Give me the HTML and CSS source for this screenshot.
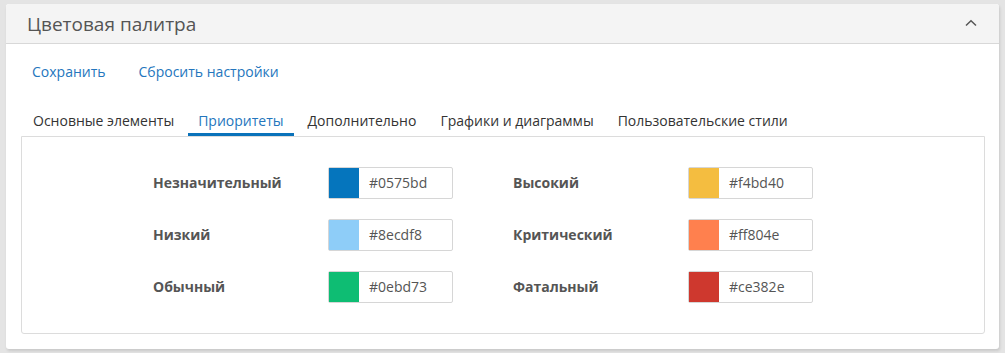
FILE: index.html
```html
<!DOCTYPE html>
<html lang="ru">
<head>
<meta charset="utf-8">
<link rel="stylesheet" href="styles.css">
</head>
<body>
<div class="card">
  <div class="card-header">
    <span class="title">Цветовая палитра</span>
    <svg class="chevron" width="12" height="8" viewBox="0 0 12 8"><path d="M1 6.5 L6 1.8 L11 6.5" fill="none" stroke="#555" stroke-width="1.5"/></svg>
  </div>
  <div class="card-body">
    <div class="actions">
      <a class="link">Сохранить</a>
      <a class="link">Сбросить настройки</a>
    </div>
    <div class="tabs">
      <div class="tab">Основные элементы</div>
      <div class="tab active">Приоритеты</div>
      <div class="tab">Дополнительно</div>
      <div class="tab">Графики и диаграммы</div>
      <div class="tab">Пользовательские стили</div>
    </div>
    <div class="panel">
      <div class="grid">
        <div class="label">Незначительный</div>
        <div class="picker"><span class="swatch" style="background:#0575bd"></span><span class="hex">#0575bd</span></div>
        <div class="label">Высокий</div>
        <div class="picker"><span class="swatch" style="background:#f4bd40"></span><span class="hex">#f4bd40</span></div>
        <div class="label">Низкий</div>
        <div class="picker"><span class="swatch" style="background:#8ecdf8"></span><span class="hex">#8ecdf8</span></div>
        <div class="label">Критический</div>
        <div class="picker"><span class="swatch" style="background:#ff804e"></span><span class="hex">#ff804e</span></div>
        <div class="label">Обычный</div>
        <div class="picker"><span class="swatch" style="background:#0ebd73"></span><span class="hex">#0ebd73</span></div>
        <div class="label">Фатальный</div>
        <div class="picker"><span class="swatch" style="background:#ce382e"></span><span class="hex">#ce382e</span></div>
      </div>
    </div>
  </div>
</div>
</body>
</html>
```
FILE: styles.css
```css
* { box-sizing: border-box; }
html, body { margin: 0; padding: 0; }
body {
  background: #e4e4e4;
  font-family: "Open Sans", "Liberation Sans", sans-serif;
  font-size: 14px;
  color: #333;
  padding: 4px 6px 0 6px;
  height: 353px;
  overflow: hidden;
}
.card {
  background: #fff;
  border-radius: 3px;
  width: 993px;
  height: 345px;
  box-shadow: 1px 2px 3px rgba(0,0,0,0.12);
}
.card-header {
  height: 40px;
  background: #f4f4f4;
  border-bottom: 1px solid #d8d8d8;
  border-radius: 3px 3px 0 0;
  display: flex;
  align-items: center;
  justify-content: space-between;
  padding: 0 22px 0 21px;
}
.title {
  font-size: 19px;
  color: #555;
  line-height: 24px;
}
.chevron { display: block; margin-top: -1px; }
.card-body {
  padding: 0 14px 0 15px;
}
.actions {
  display: flex;
  gap: 33px;
  padding: 18px 0 0 11px;
  height: 58px;
}
.link {
  color: #2476bd;
  font-size: 14px;
  line-height: 20px;
}
.tabs {
  display: flex;
  gap: 4px;
  padding-left: 2px;
  margin-top: 5px;
}
.tab {
  padding: 4px 10px 0 10px;
  line-height: 20px;
  height: 29px;
  color: #333;
  border-bottom: 3px solid transparent;
}
.tab.active {
  color: #2476bd;
  border-bottom-color: #0a72ba;
}
.panel {
  border: 1px solid #dcdcdc;
  border-radius: 0 0 3px 3px;
  height: 198px;
  padding: 30px 0 0 131px;
}
.grid {
  display: grid;
  grid-template-columns: 175px 185px 175px 125px;
  row-gap: 20px;
}
.label {
  font-weight: bold;
  color: #555;
  line-height: 32px;
  font-size: 14px;
}
.picker {
  display: flex;
  width: 125px;
  height: 32px;
  border: 1px solid #d6d6d6;
  border-radius: 2px;
}
.swatch {
  width: 30px;
  height: 30px;
  flex: none;
}
.hex {
  padding-left: 10px;
  line-height: 30px;
  color: #555;
}
```
